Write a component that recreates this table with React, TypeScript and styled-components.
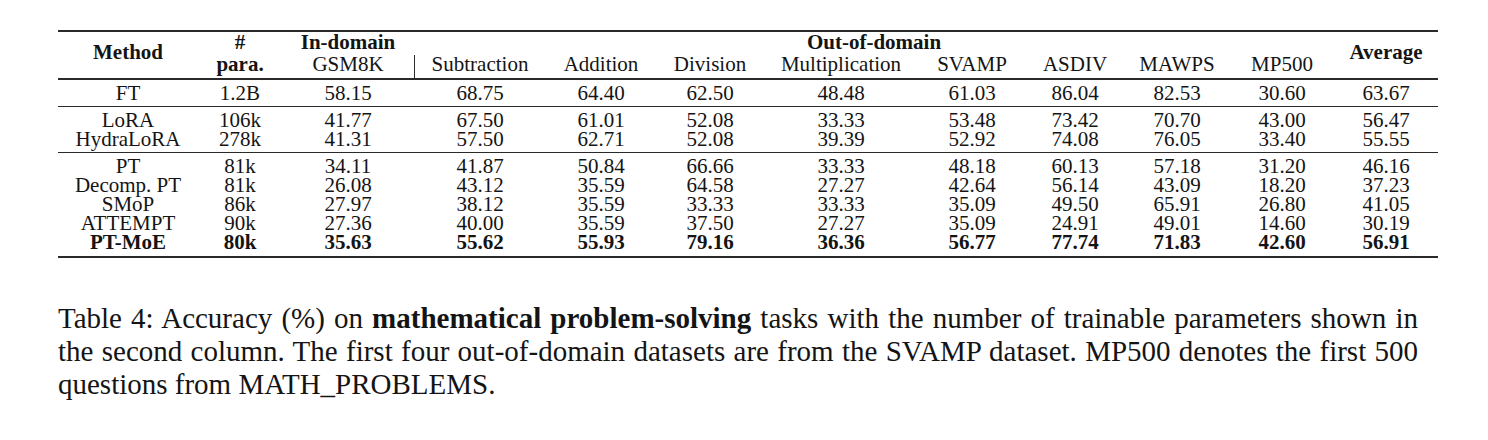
import React from "react";
import styled, { createGlobalStyle, css } from "styled-components";

const GlobalStyle = createGlobalStyle`
  html, body {
    margin: 0;
    padding: 0;
    background: #ffffff;
  }
  body {
    font-family: "Liberation Serif", "Times New Roman", serif;
    color: #141414;
  }
`;

const Page = styled.div`
  width: 1488px;
  height: 440px;
  box-sizing: border-box;
  padding: 30px 0 0 58px;
  display: flex;
  flex-direction: column;
`;

const Table = styled.table`
  width: 1380px;
  table-layout: fixed;
  border-collapse: separate;
  border-spacing: 0;
  font-family: "Liberation Serif", "Times New Roman", serif;
  font-size: 21px;
  color: #141414;
`;

const HeadCell = styled.th<{
  $top?: boolean;
  $bottom?: boolean;
  $bar?: boolean;
  $bold?: boolean;
  $h?: number;
  $valign?: "top" | "middle";
  $pt?: number;
  $pb?: number;
}>`
  padding: ${(p) => p.$pt ?? 0}px 0 ${(p) => p.$pb ?? 0}px;
  height: ${(p) => (p.$h ? `${p.$h}px` : "auto")};
  box-sizing: border-box;
  line-height: 19px;
  text-align: center;
  vertical-align: ${(p) => p.$valign ?? "middle"};
  font-weight: ${(p) => (p.$bold ? 700 : 400)};
  white-space: nowrap;
  ${(p) =>
    p.$top &&
    css`
      border-top: 2px solid #2a2a2a;
    `}
  ${(p) =>
    p.$bottom &&
    css`
      border-bottom: 1px solid #2a2a2a;
    `}
  ${(p) =>
    p.$bar &&
    css`
      background: linear-gradient(#2a2a2a, #2a2a2a) no-repeat left 0 top 3px / 1px 23px;
    `}
`;

const Cell = styled.td<{ $rule?: boolean; $last?: boolean; $end?: boolean; $bold?: boolean }>`
  padding: ${(p) => (p.$rule ? 4 : 0)}px 0 ${(p) => (p.$end ? 4 : p.$last ? 3 : 0)}px;
  line-height: 19px;
  text-align: center;
  white-space: nowrap;
  font-weight: ${(p) => (p.$bold ? 700 : 400)};
  ${(p) =>
    p.$rule &&
    css`
      border-top: 1px solid #2a2a2a;
    `}
  ${(p) =>
    p.$end &&
    css`
      border-bottom: 2px solid #2a2a2a;
    `}
`;

const Caption = styled.div`
  width: 1360px;
  margin-top: 44px;
  font-family: "Liberation Serif", "Times New Roman", serif;
  font-size: 29px;
  line-height: 33px;
  color: #141414;
`;

const CaptionLine = styled.div<{ $justify?: boolean }>`
  text-align: left;
  white-space: nowrap;
  ${(p) =>
    p.$justify &&
    css`
      text-align: justify;
      text-align-last: justify;
    `}
`;

const widths = [140, 84, 132, 132, 110, 108, 154, 108, 98, 106, 104, 104];

type Row = { cells: string[]; rule?: boolean; last?: boolean; end?: boolean; bold?: boolean };

const rows: Row[] = [
  { cells: ["FT", "1.2B", "58.15", "68.75", "64.40", "62.50", "48.48", "61.03", "86.04", "82.53", "30.60", "63.67"], rule: true, last: true },
  { cells: ["LoRA", "106k", "41.77", "67.50", "61.01", "52.08", "33.33", "53.48", "73.42", "70.70", "43.00", "56.47"], rule: true },
  { cells: ["HydraLoRA", "278k", "41.31", "57.50", "62.71", "52.08", "39.39", "52.92", "74.08", "76.05", "33.40", "55.55"], last: true },
  { cells: ["PT", "81k", "34.11", "41.87", "50.84", "66.66", "33.33", "48.18", "60.13", "57.18", "31.20", "46.16"], rule: true },
  { cells: ["Decomp. PT", "81k", "26.08", "43.12", "35.59", "64.58", "27.27", "42.64", "56.14", "43.09", "18.20", "37.23"] },
  { cells: ["SMoP", "86k", "27.97", "38.12", "35.59", "33.33", "33.33", "35.09", "49.50", "65.91", "26.80", "41.05"] },
  { cells: ["ATTEMPT", "90k", "27.36", "40.00", "35.59", "37.50", "27.27", "35.09", "24.91", "49.01", "14.60", "30.19"] },
  { cells: ["PT-MoE", "80k", "35.63", "55.62", "55.93", "79.16", "36.36", "56.77", "77.74", "71.83", "42.60", "56.91"], bold: true, end: true },
];

const subHeads = ["Subtraction", "Addition", "Division", "Multiplication", "SVAMP", "ASDIV", "MAWPS", "MP500"];

export default function App() {
  return (
    <>
      <GlobalStyle />
      <Page>
        <Table>
          <colgroup>
            {widths.map((w, i) => (
              <col key={i} style={{ width: w }} />
            ))}
          </colgroup>
          <thead>
            <tr>
              <HeadCell rowSpan={2} $top $bottom $bold $pb={6}>Method</HeadCell>
              <HeadCell $top $bold $h={22}>#</HeadCell>
              <HeadCell $top $bold $h={22}>In-domain</HeadCell>
              <HeadCell colSpan={8} $top $bold $h={22}>Out-of-domain</HeadCell>
              <HeadCell rowSpan={2} $top $bottom $bold $pb={6}>Average</HeadCell>
            </tr>
            <tr>
              <HeadCell $bottom $bold $h={27} $valign="top" $pt={3}>para.</HeadCell>
              <HeadCell $bottom $h={27} $valign="top" $pt={3}>GSM8K</HeadCell>
              {subHeads.map((h, i) => (
                <HeadCell key={h} $bottom $bar={i === 0} $h={27} $valign="top" $pt={3}>
                  {h}
                </HeadCell>
              ))}
            </tr>
          </thead>
          <tbody>
            {rows.map((r) => (
              <tr key={r.cells[0]}>
                {r.cells.map((c, i) => (
                  <Cell key={i} $rule={r.rule} $last={r.last} $end={r.end} $bold={r.bold}>
                    {c}
                  </Cell>
                ))}
              </tr>
            ))}
          </tbody>
        </Table>
        <Caption>
          <CaptionLine $justify>
            Table 4: Accuracy (%) on <b>mathematical problem-solving</b> tasks with the number of trainable parameters shown in
          </CaptionLine>
          <CaptionLine $justify>
            the second column. The first four out-of-domain datasets are from the SVAMP dataset. MP500 denotes the first 500
          </CaptionLine>
          <CaptionLine>questions from MATH_PROBLEMS.</CaptionLine>
        </Caption>
      </Page>
    </>
  );
}
